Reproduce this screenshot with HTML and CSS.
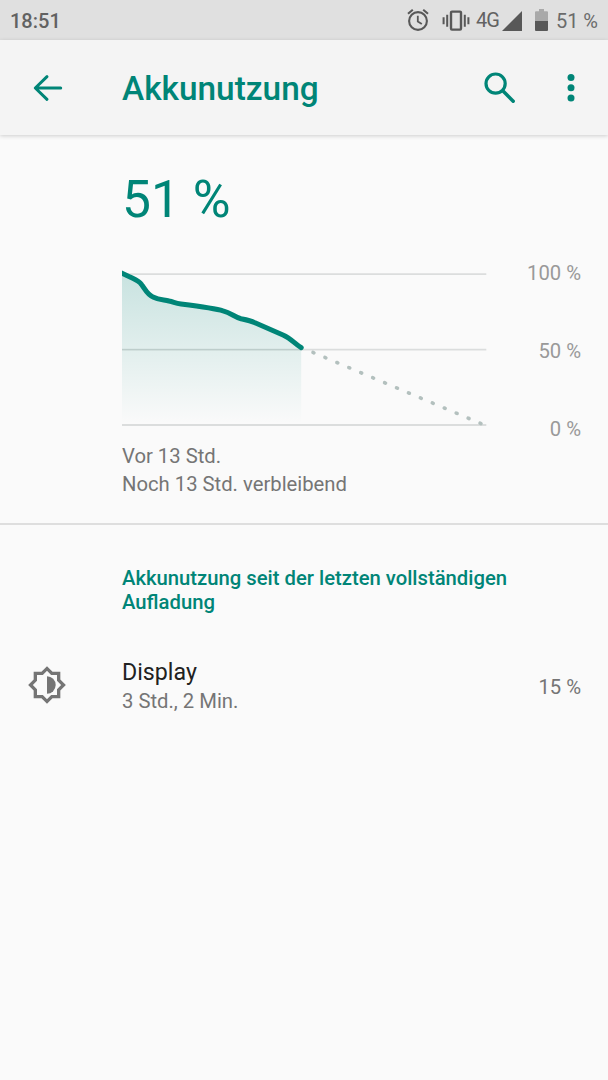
FILE: index.html
```html
<!DOCTYPE html>
<html lang="de">
<head>
<meta charset="utf-8">
<title>Akkunutzung</title>
<link rel="stylesheet" href="styles.css">
</head>
<body>
<div class="statusbar">
  <span class="clock">18:51</span>
  <div class="status-icons">
    <svg class="alarm" width="22" height="24" viewBox="0 0 22 24" fill="none" stroke="#585858" stroke-width="2.1">
      <circle cx="11" cy="13" r="8.9"/>
      <path d="M10.8 7.8V13.4L14.8 16" stroke-width="1.8"/>
      <path d="M1 5.8L5.8 1.8M21 5.8L16.2 1.8" stroke-width="2.1"/>
    </svg>
    <svg class="vibrate" width="28" height="22" viewBox="0 0 28 22" fill="none" stroke="#585858" stroke-width="2.4">
      <rect x="9" y="1.6" width="10" height="18" rx="1"/>
      <path d="M5.2 4.8V16.8M22.8 4.8V16.8M1.6 7.3V14.3M26.4 7.3V14.3" stroke-width="2"/>
    </svg>
    <span class="network">4G</span>
    <svg class="signal" width="20" height="20" viewBox="0 0 20 20"><path d="M0 20L20 0V20Z" fill="#585858"/></svg>
    <svg class="battery" width="13" height="22" viewBox="0 0 13 22">
      <path d="M1 2.3H4V0H9V2.3H12Q13 2.3 13 3.3V12H0V3.3Q0 2.3 1 2.3Z" fill="#a9a9a9"/>
      <path d="M0 12H13V21Q13 22 12 22H1Q0 22 0 21Z" fill="#585858"/>
    </svg>
    <span class="level">51 %</span>
  </div>
</div>
<header class="appbar">
  <svg class="back" width="30" height="28" viewBox="0 0 30 28" fill="none" stroke="#008577" stroke-width="3" stroke-linecap="round" stroke-linejoin="round">
    <path d="M14 2.7L2.3 14L14 25.3M2.8 14H27.7"/>
  </svg>
  <h1 class="title">Akkunutzung</h1>
  <svg class="search" width="32" height="32" viewBox="0 0 32 32" fill="none" stroke="#008577">
    <circle cx="11.6" cy="11.6" r="9.6" stroke-width="3.2"/>
    <path d="M19.3 19.3L29.2 29.2" stroke-width="3.5" stroke-linecap="round"/>
  </svg>
  <svg class="more" width="8" height="30" viewBox="0 0 8 30" fill="#008577">
    <circle cx="4" cy="4.6" r="3.5"/><circle cx="4" cy="14.8" r="3.5"/><circle cx="4" cy="25" r="3.5"/>
  </svg>
</header>
<main>
  <section class="summary">
    <div class="percent">51 %</div>
    <div class="usage">
      <svg class="chart" width="366" height="160" viewBox="122 268 366 160" fill="none">
        <defs>
          <linearGradient id="fade" gradientUnits="userSpaceOnUse" x1="0" y1="273" x2="0" y2="424">
            <stop offset="0" stop-color="#008577" stop-opacity=".2"/>
            <stop offset="1" stop-color="#008577" stop-opacity="0"/>
          </linearGradient>
        </defs>
        <path d="M122 274.2H486.3M122 349.6H486.3M122 425H486.3" stroke="#dbdddd" stroke-width="1.8"/>
        <path d="M122 273.3L130 277C136 280 139 281 141.5 284.5C145 289 147 294.5 153 297C160 300.5 164 299.5 169 301C174 302 175 303.3 181 304C199 306.3 216 308.6 223 310.8C231 313 235 317.3 241 318.8C247 320 250 320.5 255 322.8L283 335C291 338.5 294 343 301.2 347.7V424H122Z" fill="url(#fade)"/>
        <path d="M122 349.6H301" stroke="#bccdca" stroke-width="1"/>
        <path d="M119 272L130 277C136 280 139 281 141.5 284.5C145 289 147 294.5 153 297C160 300.5 164 299.5 169 301C174 302 175 303.3 181 304C199 306.3 216 308.6 223 310.8C231 313 235 317.3 241 318.8C247 320 250 320.5 255 322.8L283 335C291 338.5 294 343 301.2 347.7" stroke="#008577" stroke-width="5" stroke-linecap="round" stroke-linejoin="round"/>
        <path d="M313 352.4L482 424" stroke="#b3c0be" stroke-width="3.6" stroke-linecap="round" stroke-dasharray="1 11.96"/>
      </svg>
      <div class="scale"><span>100 %</span><span>50 %</span><span>0 %</span></div>
    </div>
    <p class="caption">Vor 13 Std.<br>Noch 13 Std. verbleibend</p>
  </section>
  <section class="details">
    <h2 class="heading">Akkunutzung seit der letzten vollständigen<br>Aufladung</h2>
    <div class="entry">
      <svg class="brightness" width="40" height="40" viewBox="0 0 24 24" fill="#757575">
        <path d="M20 15.31L23.31 12 20 8.69V4h-4.69L12 .69 8.69 4H4v4.69L.69 12 4 15.31V20h4.69L12 23.31 15.31 20H20v-4.69zM18 14.48V18h-3.52L12 20.48 9.52 18H6v-3.52L3.52 12 6 9.52V6h3.52L12 3.52 14.48 6H18v3.52L20.48 12 18 14.48z" fill-rule="evenodd"/>
        <path d="M12 6.8a5.2 5.2 0 0 1 0 10.4z"/>
      </svg>
      <div class="entry-text">
        <div class="name">Display</div>
        <div class="duration">3 Std., 2 Min.</div>
      </div>
      <div class="share">15 %</div>
    </div>
  </section>
</main>
</body>
</html>
```
FILE: styles.css
```css
* { box-sizing: border-box; }
body {
  margin: 0;
  min-height: 1080px;
  background: #fafafa;
  color: #757575;
  font: 400 20.25px/28px Roboto, sans-serif;
}
h1, h2, p { margin: 0; }
svg { display: block; flex: none; }

.statusbar {
  display: flex;
  justify-content: space-between;
  height: 40px;
  padding: 0 10px 0 10px;
  background: #e0e0e0;
  color: #626262;
  line-height: 42px;
}
.clock { font-weight: 500; font-size: 20px; }
.status-icons { display: flex; }
.alarm { margin: 8px 13px 0 0; }
.vibrate { margin: 10px 6px 0 0; }
.network { width: 21px; margin-right: 5px; font-size: 20px; line-height: 41px; letter-spacing: -.8px; white-space: nowrap; }
.signal { margin: 11px 13px 0 0; }
.battery { margin: 9px 8px 0 0; }
.level { font-size: 20px; color: #6b6b6b; }

.appbar {
  display: flex;
  align-items: center;
  height: 95px;
  padding: 0 33px;
  background: #f4f4f4;
  box-shadow: 0 1px 4px rgba(0, 0, 0, .18);
}
.title {
  flex: 1;
  margin-left: 59px;
  padding-top: 3px;
  color: #008577;
  font-weight: 500;
  font-size: 33.4px;
  line-height: 40px;
}
.search { margin-right: 51px; }

.summary {
  height: 390px;
  padding: 35px 27px 0 122px;
  border-bottom: 2px solid #dedede;
}
.percent { color: #008577; font-size: 51.6px; line-height: 60px; }
.usage { display: flex; justify-content: space-between; margin-top: 38px; height: 160px; }
.scale {
  display: flex;
  flex-direction: column;
  justify-content: space-between;
  height: 184px;
  margin-top: -9px;
  color: #999;
  text-align: right;
}
.caption { margin-top: 14px; }

.details { padding: 41px 27px 0 27px; }
.heading {
  margin-left: 95px;
  color: #008577;
  font-weight: 500;
  font-size: 20.25px;
  line-height: 24px;
}
.entry { display: flex; align-items: center; margin-top: 43px; }
.brightness { margin-top: -3px; }
.entry-text { flex: 1; margin-left: 55px; }
.name { color: #212121; font-size: 23.2px; line-height: 30px; }
.duration { line-height: 29px; }
```
